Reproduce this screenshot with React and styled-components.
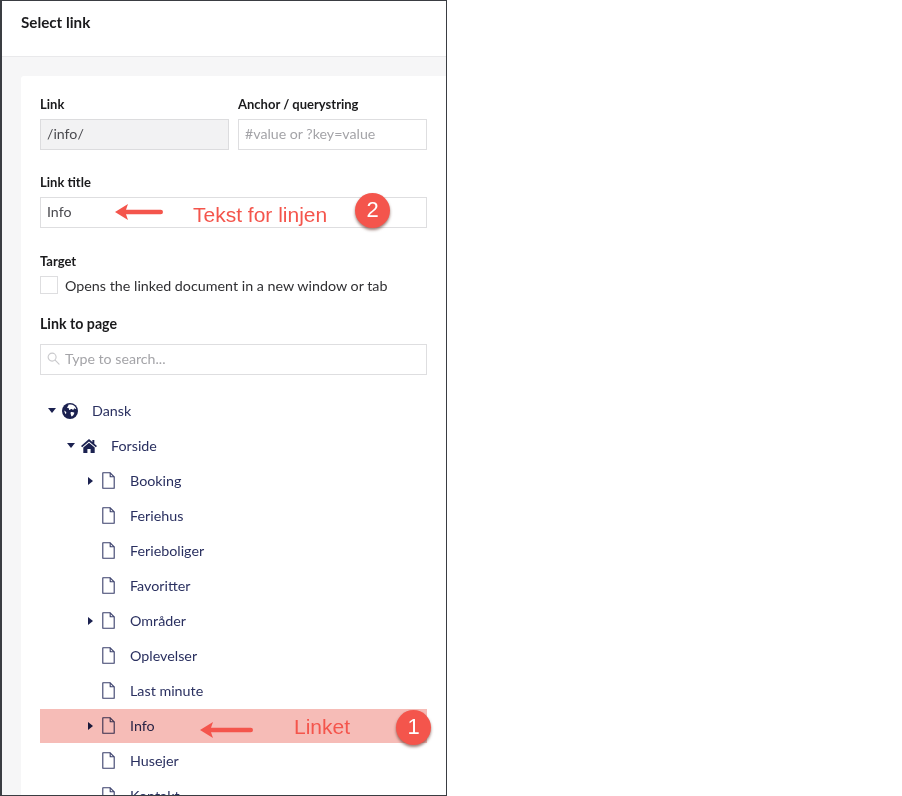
import React from "react";
import styled, { createGlobalStyle } from "styled-components";

const Global = createGlobalStyle`
  html, body { margin: 0; padding: 0; background: #fff; }
  body { width: 902px; height: 796px; overflow: hidden; font-family: Lato, "Open Sans", sans-serif; }
`;

const Dialog = styled.div`
  position: relative;
  box-sizing: border-box;
  width: 447px;
  height: 796px;
  border: 1px solid #3a3d42;
  border-left-width: 2px;
  background: #f6f6f7;
  display: flex;
  flex-direction: column;
  overflow: hidden;
`;
const Header = styled.header`
  box-sizing: border-box;
  height: 56px;
  flex: none;
  background: #fff;
  border-bottom: 1px solid #e9e9eb;
  padding: 11px 0 0 19px;
  font-size: 15.2px;
  line-height: 20px;
  font-weight: 700;
  color: #1b1b1d;
`;
const Card = styled.main`
  flex: 1;
  min-height: 0;
  margin: 19px 0 0 19px;
  padding: 19px 19px 0 19px;
  background: #fff;
  border-radius: 3px 0 0 0;
  overflow: hidden;
`;
const TwoCols = styled.div`
  display: grid;
  grid-template-columns: 189px 189px;
  column-gap: 9px;
`;
const Field = styled.div`
  margin-bottom: ${(p) => p.$mb ?? 21}px;
`;
const Label = styled.div`
  font-size: ${(p) => p.$size ?? 13}px;
  line-height: 18px;
  font-weight: 700;
  color: #1b1b1d;
  margin-bottom: ${(p) => p.$mb ?? 6}px;
`;
const Input = styled.div`
  box-sizing: border-box;
  height: 31px;
  width: 100%;
  display: flex;
  align-items: center;
  gap: 5px;
  padding: 0 6px 2px;
  font-size: 14.2px;
  color: ${(p) => (p.$placeholder ? "#a4a4a8" : "#4a4a4f")};
  background: ${(p) => (p.$disabled ? "#f2f2f3" : "#fff")};
  border: 1px solid ${(p) => (p.$disabled ? "#dcdcde" : "#dedee0")};
`;
const CheckRow = styled.div`
  display: flex;
  align-items: center;
  gap: 7px;
  height: 18px;
  font-size: 14.3px;
  color: #303033;
`;
const Box = styled.span`
  box-sizing: border-box;
  width: 18px;
  height: 18px;
  border: 1px solid #dedee0;
  flex: none;
`;
const Tree = styled.ul`
  list-style: none;
  margin: 18px 0 0;
  padding: 0;
`;
const Row = styled.li`
  position: relative;
  display: flex;
  align-items: center;
  height: 35px;
  padding-left: ${(p) => 6 + p.$level * 19}px;
  font-size: 14.3px;
  color: #2a3060;
`;
const Caret = styled.span`
  flex: none;
  width: 12px;
  display: flex;
  justify-content: center;
`;
const IconSlot = styled.span`
  flex: none;
  width: 16px;
  height: 18px;
  margin: 0 14px 0 4px;
  display: flex;
  align-items: center;
  justify-content: center;
`;
const Highlight = styled.div`
  position: absolute;
  left: 38px;
  top: 708px;
  width: 387px;
  height: 34px;
  background: #f6bcb7;
  mix-blend-mode: multiply;
`;
const Note = styled.span`
  position: absolute;
  left: ${(p) => p.$x}px;
  top: ${(p) => p.$y}px;
  font-family: "Liberation Sans", Arial, sans-serif;
  font-size: 21px;
  line-height: 24px;
  color: #f4554c;
  white-space: nowrap;
`;
const Badge = styled.span`
  position: absolute;
  left: ${(p) => p.$x}px;
  top: ${(p) => p.$y}px;
  width: 35px;
  height: 35px;
  border-radius: 50%;
  background: #f4554c;
  color: #fff;
  font-family: "Liberation Sans", Arial, sans-serif;
  font-size: 22px;
  line-height: 34px;
  text-align: center;
  box-shadow: 0 2px 3px rgba(90, 40, 30, 0.6);
`;
const ArrowMark = styled.svg`
  position: absolute;
  left: ${(p) => p.$x}px;
  top: ${(p) => p.$y}px;
`;

const Down = () => (
  <svg width="8" height="5" viewBox="0 0 8 5"><path d="M0 0h8L4 5z" fill="#1b2150" /></svg>
);
const RightCaret = () => (
  <svg width="5" height="8" viewBox="0 0 5 8"><path d="M0 0v8l5-4z" fill="#1b2150" /></svg>
);
const Doc = () => (
  <svg width="13" height="17" viewBox="0 0 13 17" fill="#fff" stroke="#3a3f6b" strokeWidth="1.1" strokeLinejoin="round">
    <path d="M.8.8h7.4l4 4v11.4H.8z" />
    <path d="M8.2.8v4h4" fill="none" />
  </svg>
);
const Globe = () => (
  <svg width="16" height="16" viewBox="0 0 16 16">
    <circle cx="8" cy="8" r="8" fill="#1b2150" />
    <path d="M6.500 1.800c1.800-.6 3.900-.4 5.300.6 1.300.9 2.100 2.100 2.400 3.500-.8.2-1.300-.3-1.900-.6-.6.5-.3 1.300-1 1.500-.8-.2-1.200-1-2-.9-.9.2-1.200 1-2 1.200-.5-.6-.1-1.300-.6-1.800-.5-.3-1.300-.2-1.700-.7.5-1 1.600-1.500 1.500-3.800z" fill="#fff" />
    <path d="M9 9c1.200-.3 2.600.1 3.400.8-.3 1.500-1.300 3-2.600 3.600-.9-.5-.7-1.600-1.100-2.400-.2-.7-.3-1.400.3-2zM2.300 7.500c.7.400 1.300 1 1.900 1.500.3.900-.2 1.600-.4 2.200-.8-1-1.400-2.300-1.500-3.700z" fill="#fff" />
  </svg>
);
const Home = () => (
  <svg width="18" height="16" viewBox="0 0 18 16" fill="#1b2150">
    <path d="M9 0 0 8l1.300 1.400L9 2.900l7.700 6.500L18 8l-3-2.600V1.200h-2.200v2.300z" />
    <path d="M2.600 9.800 9 4.300l6.400 5.500V16h-4.600v-4.700H7.200V16H2.600z" />
  </svg>
);
const Search = () => (
  <svg width="13" height="13" viewBox="0 0 14 14" fill="none" stroke="#c9c9cc" strokeWidth="1.200" strokeLinecap="round">
    <circle cx="5.500" cy="5.500" r="4.300" />
    <path d="m9 9 4 4" />
  </svg>
);
const Arrow = ({ x, y, w }) => (
  <ArrowMark $x={x} $y={y} width={w} height="18" viewBox={`0 0 ${w} 18`}>
    <path d={`M0 9 13 1 11 6.700H${w - 2.300}a2.300 2.300 0 0 1 0 4.600H11L13 17z`} fill="#f4554c" />
  </ArrowMark>
);

const rows = [
  { label: "Dansk", level: 0, caret: "down", icon: "globe" },
  { label: "Forside", level: 1, caret: "down", icon: "home" },
  { label: "Booking", level: 2, caret: "right" },
  { label: "Feriehus", level: 2 },
  { label: "Ferieboliger", level: 2 },
  { label: "Favoritter", level: 2 },
  { label: "Områder", level: 2, caret: "right" },
  { label: "Oplevelser", level: 2 },
  { label: "Last minute", level: 2 },
  { label: "Info", level: 2, caret: "right" },
  { label: "Husejer", level: 2 },
  { label: "Kontakt", level: 2 },
];

export default function App() {
  return (
    <>
      <Global />
      <Dialog>
        <Header>Select link</Header>
        <Card>
          <TwoCols>
            <Field $mb={23}>
              <Label>Link</Label>
              <Input $disabled>/info/</Input>
            </Field>
            <Field $mb={23}>
              <Label>Anchor / querystring</Label>
              <Input $placeholder>#value or ?key=value</Input>
            </Field>
          </TwoCols>
          <Field $mb={24}>
            <Label>Link title</Label>
            <Input>Info</Input>
          </Field>
          <Field $mb={21}>
            <Label $mb={6}>Target</Label>
            <CheckRow><Box />Opens the linked document in a new window or tab</CheckRow>
          </Field>
          <Field $mb={0}>
            <Label $mb={11} $size={14.2}>Link to page</Label>
            <Input $placeholder><Search />Type to search...</Input>
          </Field>
          <Tree>
            {rows.map((r) => (
              <Row key={r.label} $level={r.level}>
                <Caret>{r.caret === "down" ? <Down /> : r.caret === "right" ? <RightCaret /> : null}</Caret>
                <IconSlot>{r.icon === "globe" ? <Globe /> : r.icon === "home" ? <Home /> : <Doc />}</IconSlot>
                {r.label}
              </Row>
            ))}
          </Tree>
        </Card>
        <Highlight />
        <Arrow x={113} y={202} w={48} />
        <Note $x={191} $y={202}>Tekst for linjen</Note>
        <Badge $x={353} $y={192}>2</Badge>
        <Arrow x={198} y={720} w={53} />
        <Note $x={292} $y={714}>Linket</Note>
        <Badge $x={394} $y={709}>1</Badge>
      </Dialog>
    </>
  );
}
